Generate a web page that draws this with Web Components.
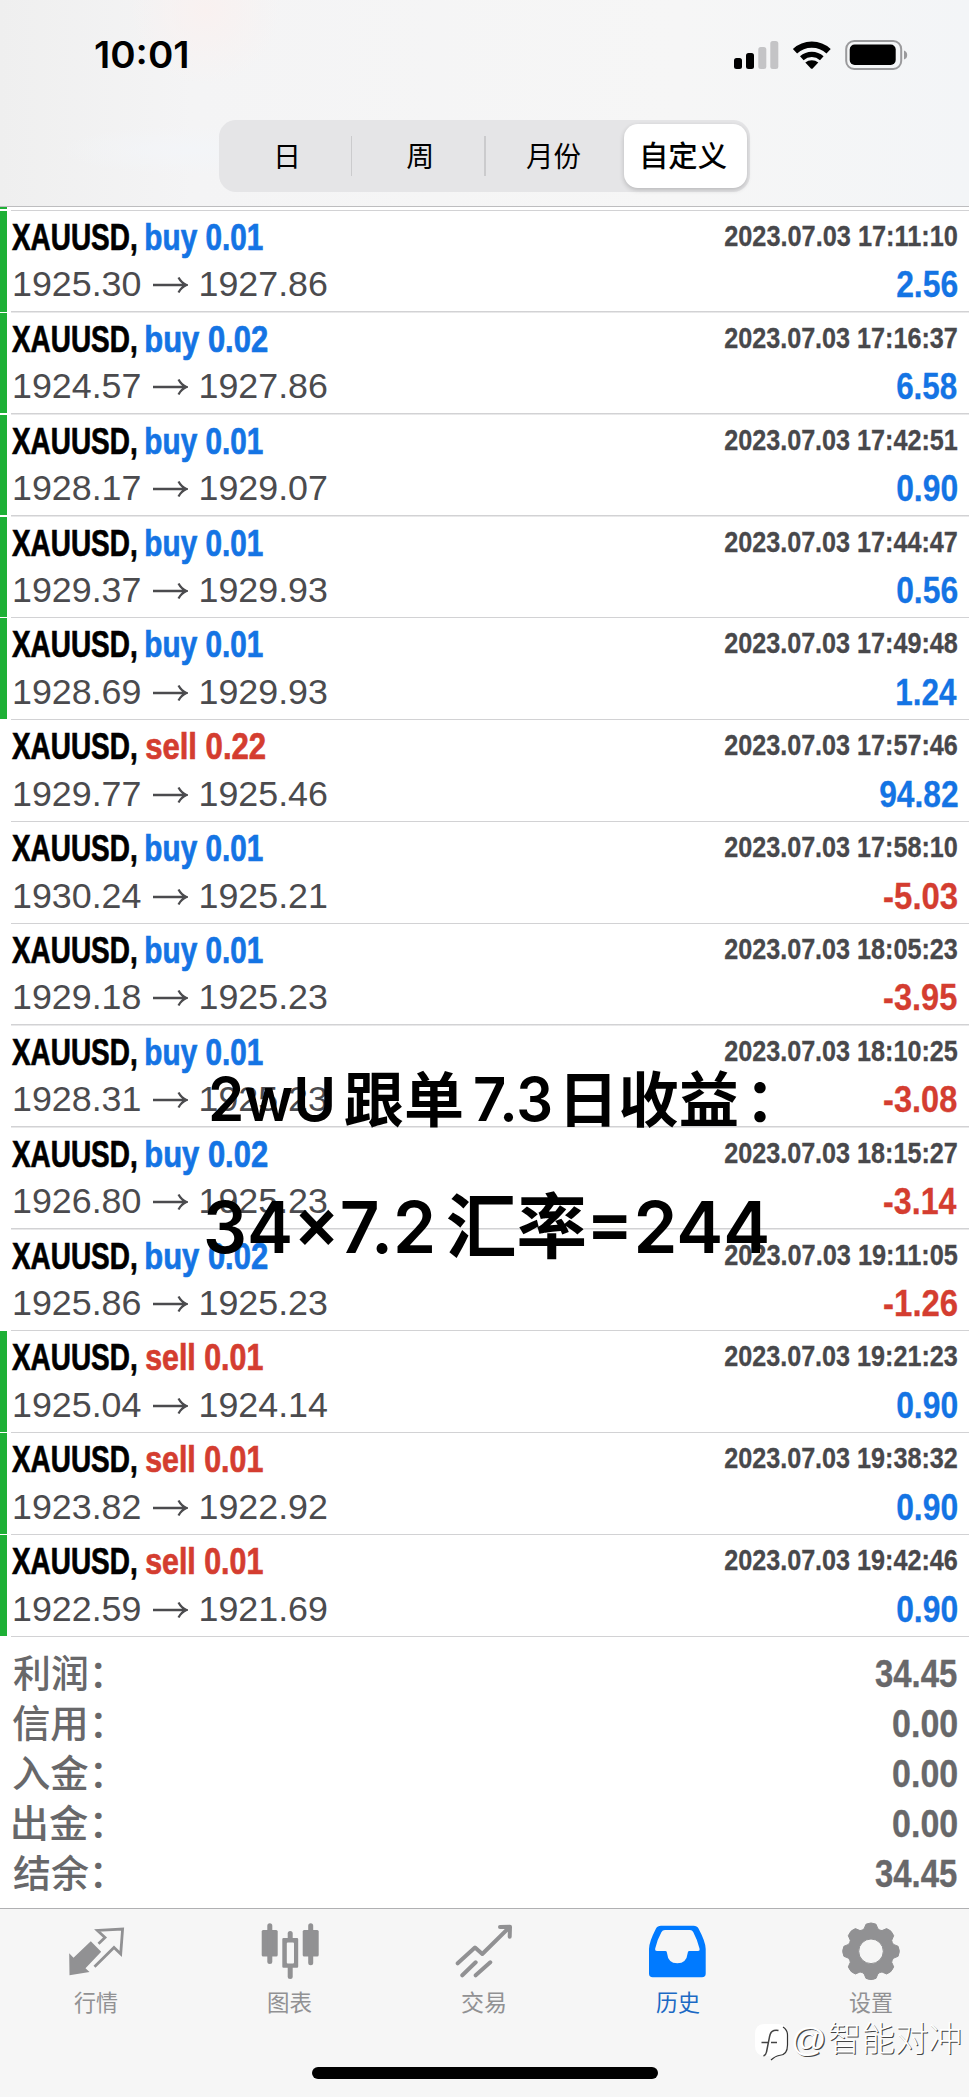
<!DOCTYPE html>
<html lang="zh-CN">
<head>
<meta charset="utf-8">
<title>历史</title>
<style>
html,body{margin:0;padding:0;background:#fff}
body{width:969px;height:2097px;overflow:hidden;font-family:"Liberation Sans","Noto Sans CJK SC",sans-serif}
</style>
</head>
<body>
<history-screen></history-screen>
<script>
const CJK='"Noto Sans CJK SC",sans-serif';
const SANS='"Liberation Sans",'+CJK;
const UI='Inter,'+CJK;
const define=(name,html,setup)=>customElements.define(name,class extends HTMLElement{
  connectedCallback(){
    if(this.shadowRoot)return;
    const root=this.attachShadow({mode:'open'});
    const t=document.createElement('template');
    t.innerHTML=typeof html==='function'?html(this):html;
    root.append(t.content.cloneNode(true));
    if(setup)setup(this,root);
  }
});

/* Text squeezed or stretched horizontally so that its ink is exactly `w` pixels wide. */
const ctx=document.createElement('canvas').getContext('2d');
define('fit-text',el=>{
  const w=+el.getAttribute('w'),size=el.getAttribute('size'),weight=el.getAttribute('weight')||400;
  const family=el.getAttribute('face')==='ui'?UI:SANS;
  ctx.font=`${weight} ${size}px ${family}`;
  const m=ctx.measureText(el.textContent);
  const l=-m.actualBoundingBoxLeft,k=w/(m.actualBoundingBoxRight+m.actualBoundingBoxLeft);
  return `<style>:host{display:block;flex:none;width:${w}px;white-space:pre;font:${weight} ${size}px/37px ${family}}
  span{display:inline-block;transform-origin:0 0;transform:translateX(${-l*k}px) scaleX(${k});margin-right:-300px}</style><span><slot></slot></span>`;
});

define('status-bar',`<style>
:host{display:flex;align-items:center;height:110px;box-sizing:border-box;padding:0 61px 0 95px}
.g{flex:1}
svg{display:block}
</style>
<fit-text w="92" size="36.5" weight="600" face="ui">10:01</fit-text><div class="g"></div>
<svg width="174" height="32" viewBox="0 0 174 32">
<g><rect x="0" y="19" width="8" height="11" rx="2.5"/><rect x="12" y="14" width="8" height="16" rx="2.5"/>
<rect x="24.3" y="8" width="8" height="22" rx="2.5" fill="#c4c4c6"/><rect x="36.3" y="2" width="8" height="28" rx="2.5" fill="#c4c4c6"/></g>
<g fill="none" stroke="#000"><path d="M61 12.2A24.5 24.5 0 0 1 94.6 12.2" stroke-width="6.2"/><path d="M67.8 19.2A15 15 0 0 1 87.8 19.2" stroke-width="5.4"/></g>
<path d="M71.3 23.6A10 10 0 0 1 84.3 23.6L78.7 29.4Q77.8 30.1 76.9 29.4Z"/>
<rect x="112.2" y="2" width="55" height="28" rx="8" fill="none" stroke="#9a9a9c" stroke-width="2"/>
<rect x="115.7" y="5.5" width="46" height="20.5" rx="5"/>
<path d="M170 11.5q3.2 1 3.2 4.5t-3.2 4.5z" fill="#9a9a9c"/></svg>`);

define('segment-control',`<style>
:host{display:grid;grid-template-columns:130px 133.500px 138px 123.500px;width:531px;height:72px;box-sizing:border-box;padding:4px 3px;background:#e5e5e7;border-radius:17px;margin:0 auto}
.s{display:grid;place-items:center;position:relative}
.s fit-text{margin-top:2px}
.s i{display:block;position:absolute;right:0;top:12px;height:40px;width:1.5px;background:#cbcbcd}
.m{padding-right:3px}
.on{background:#fff;border-radius:14px;box-shadow:0 2px 5px #0003}
</style>
<div class="s"><fit-text w="20" size="28">日</fit-text><i></i></div>
<div class="s"><fit-text w="25" size="28">周</fit-text><i></i></div>
<div class="s m"><fit-text w="55" size="28">月份</fit-text></div>
<div class="s on"><fit-text w="84" size="29" weight="500">自定义</fit-text></div>`);

define('trade-row',el=>{
  const [side,vol,from,to,date,profit,flag]=el.getAttribute('data').split('|');
  const sw=vol==='0.22'?119:vol==='0.02'?121:117;
  const pw=profit[0]==='-'?73:profit.length>4?77.5:60;
  return `<style>
:host{display:grid;grid-template-columns:12px 1fr auto;grid-template-rows:37px 37px;row-gap:10.4px;padding:8px 12px 0 0;height:101.86px;box-sizing:border-box;
 background:linear-gradient(#d2d2d4,#d2d2d4) 11px 100%/100% 1.5px no-repeat}
.bar{grid-row:1/3;width:7px;height:100.5px;margin-top:-8px;background:${flag?'#1eb036':'transparent'}}
.l{display:flex}.r{display:flex;justify-content:flex-end}
.t{-webkit-text-stroke:.7px currentColor}
.r{-webkit-text-stroke:.3px currentColor}
.d{margin-top:-2px}
.p{font:35.8px/37px "Liberation Sans",sans-serif;color:#4b4b4e}
.p span{width:187.5px}.p svg{width:36px;height:20px;margin:9px 0 0 -48px}.p b{font-weight:400;margin-left:11px}
</style>
<div class="bar"></div>
<div class="l t"><fit-text w="124" size="36.5" weight="700" style="color:#000">XAUUSD,</fit-text><fit-text style="margin-left:10px;color:${side==='buy'?'#1474e4':'#d43d30'}" w="${sw}" size="36.5" weight="700">${side} ${vol}</fit-text></div>
<div class="r d"><fit-text style="color:#48484b" w="232.5" size="29.5" weight="700">${date}</fit-text></div>
<div class="l p"><span>${from}</span><svg viewBox="0 0 36 20"><path d="M1 10H34M26.500 2.500Q29.500 8 34.500 10Q29.500 12 26.500 17.500" fill="none" stroke="#4b4b4e" stroke-width="2.300"/></svg><b>${to}</b></div>
<div class="r"><fit-text style="color:${profit[0]==='-'?'#d43d30':'#1474e4'}" w="${pw}" size="36.5" weight="700">${profit}</fit-text></div>`;
});

define('summary-row',el=>`<style>
:host{display:flex;justify-content:space-between;align-items:center;height:49.8px;padding:0 12px 0 12.500px;color:#68686a}
</style><fit-text style="margin-top:2px" w="89" size="37.5" weight="500">${el.getAttribute('label')}：</fit-text>
<fit-text style="-webkit-text-stroke:.3px currentColor" w="${el.getAttribute('value').length>4?82:64}" size="38.5" weight="700">${el.getAttribute('value')}</fit-text>`);

const gear=(()=>{let d='';for(let i=0;i<8;i++){const a=i*45;
  const p=(r,o)=>{const t=(a+o-90)*Math.PI/180;return (30+r*Math.cos(t)).toFixed(1)+' '+(29.3+r*Math.sin(t)).toFixed(1)};
  d+=(i?'L':'M')+p(23.5,-17)+'L'+p(27.6,-10.5)+'Q'+p(29.6,0)+' '+p(27.6,10.5)+'L'+p(23.5,17)+'Q'+p(22.6,22.5)+' '+p(23.5,28);}
  return d+'Z';})();
const ICONS={
quotes:'<path fill="currentColor" d="M3.200 31.300L7.500 35.700L24.800 19.300L35.200 29.700L19.500 46.300L23.500 50L3.500 53.200Z"/><path fill="none" stroke="currentColor" stroke-width="2.800" d="M32.500 21.700L39 15.500L31.400 8.400L56.600 7L54.700 32L48 25.500L28.500 44.700"/>',
chart:'<g fill="currentColor"><rect x="1.700" y="8" width="16" height="26.500" rx="1.500"/><rect x="7.300" y="1.300" width="5" height="40.700" rx="2.500"/><rect x="42.700" y="8" width="16" height="26.500" rx="1.500"/><rect x="48.200" y="1.300" width="5" height="42" rx="2.500"/><rect x="27.700" y="9" width="5" height="10" rx="2.500"/><rect x="27.700" y="43" width="5" height="14" rx="2.500"/><path fill-rule="evenodd" d="M23.500 16H37Q38.200 16 38.200 17.200V44.500Q38.200 45.700 37 45.700H23.500Q22.300 45.700 22.300 44.500V17.200Q22.300 16 23.500 16ZM27.800 20.500Q26.800 20.500 26.800 21.500V40.500Q26.800 41.500 27.800 41.500H33Q34 41.500 34 40.500V21.500Q34 20.500 33 20.500Z"/></g>',
trade:'<path fill="none" stroke="currentColor" stroke-width="4" stroke-linecap="round" stroke-linejoin="round" d="M4.700 41.300L22 25.500L29.300 32L56 5.700M47 5L57 4.700L56.700 14.700M9.300 53.300L22.700 40.300M22.700 53.300L37.300 40.300"/>',
history:'<path fill="currentColor" fill-rule="evenodd" d="M14 3.700H46.500Q50 3.700 51.500 6.500Q58.700 20 58.700 27V51.500Q58.700 55.300 55 55.300H5.700Q2 55.300 2 51.500V27Q2 20 9 6.500Q10.500 3.700 14 3.700ZM18 8Q15.500 8 14.500 10Q10 18 8.200 26.500Q7.800 29 10 29H18.500Q20 29 20 31Q21 41.300 30.300 41.300T40.700 31Q40.700 29 42.200 29H51Q53 29 52.500 26.500Q50.500 18 46.200 10Q45.200 8 43 8Z"/>',
settings:'<path fill="currentColor" stroke="currentColor" stroke-linejoin="round" fill-rule="evenodd" d="'+gear+'M42.300 29.300A12.300 12.300 0 1 0 17.700 29.300A12.300 12.300 0 1 0 42.300 29.300Z"/>'};
define('tab-item',el=>`<style>
:host{display:flex;flex:1;flex-direction:column;align-items:center;color:${el.hasAttribute('active')?'#007aff':'#919193'}}
svg{display:block;width:60px;height:60px}
fit-text{margin-top:3px;${el.hasAttribute('active')?'color:#1b69c4':''}}
</style><svg viewBox="0 0 60 60">${ICONS[el.getAttribute('icon')]}</svg><fit-text w="43.500" size="22.500">${el.getAttribute('label')}</fit-text>`);

define('tab-bar',`<style>
:host{display:block;height:189px;box-sizing:border-box;border-top:1.5px solid #b0b0b2;background:#f6f6f6;padding-top:13px}
nav{display:flex;height:144.500px;margin-left:-1px;margin-right:1px}
.home{width:346px;height:12px;border-radius:6px;background:#000;margin:0 auto}
</style><nav><tab-item icon="quotes" label="行情"></tab-item><tab-item icon="chart" label="图表"></tab-item><tab-item icon="trade" label="交易"></tab-item><tab-item icon="history" label="历史" active></tab-item><tab-item icon="settings" label="设置"></tab-item></nav><div class="home"></div>`);

define('note-overlay',`<style>
:host{position:absolute;left:0;top:1062px;width:969px;color:#000}
div{display:flex;align-items:center;height:74px}
.c{margin-top:4px}
.b{margin-top:52px}
</style>
<div style="padding-left:211px"><fit-text w="121" size="60" weight="600" face="ui">2wU</fit-text><fit-text class="c" style="margin-left:13px" w="117" size="60" weight="700">跟单</fit-text><fit-text style="margin-left:13px" w="76" size="60" weight="600" face="ui">7.3</fit-text><fit-text class="c" style="margin-left:16px" w="170" size="60" weight="700">日收益</fit-text><fit-text class="c" style="margin-left:17px" w="12" size="60" weight="700">：</fit-text></div>
<div class="b" style="padding-left:206px"><fit-text style="margin-top:5px" w="226" size="71" weight="600" face="ui">34×7.2</fit-text><fit-text style="margin-left:15px;margin-top:5px" w="138" size="71" weight="700">汇率</fit-text><fit-text style="margin-left:8px;margin-top:5px" w="174" size="71" weight="600" face="ui">=244</fit-text></div>`);

define('water-mark',`<style>
:host{position:absolute;left:754px;top:2022px;display:flex;align-items:center;height:40px;color:#fff}
svg{display:block;width:35px;height:40px}
fit-text{text-shadow:1px 1px 0 #444;margin-top:-5px}
</style><svg viewBox="0 0 35 40"><path fill="#fff" d="M11 2H24Q33.500 2 33.500 12V23Q33.500 33.500 25 33.500Q21.500 34 17 38Q18 35 16 34H10Q1 33 1 24V12Q1 2 11 2Z"/><path d="M29 5Q33.500 8 33.500 13V23Q33.500 33.500 25 33.500Q21.500 34 17 38" fill="none" stroke="#333" stroke-width="1.200"/><path d="M24.500 8.500Q16.500 7 15.500 15L12.500 30Q12 33 9.500 34M7.500 20.500H14M17 20.500H23" fill="none" stroke="#444" stroke-width="1.500"/></svg><fit-text style="margin-left:4px" w="31" size="33">@</fit-text><fit-text style="margin-left:5px" w="131" size="34" weight="300">智能对冲</fit-text>`);

const trades=['buy|0.01|1925.30|1927.86|17:11:10|2.56|1','buy|0.02|1924.57|1927.86|17:16:37|6.58|1','buy|0.01|1928.17|1929.07|17:42:51|0.90|1','buy|0.01|1929.37|1929.93|17:44:47|0.56|1','buy|0.01|1928.69|1929.93|17:49:48|1.24|1','sell|0.22|1929.77|1925.46|17:57:46|94.82|','buy|0.01|1930.24|1925.21|17:58:10|-5.03|','buy|0.01|1929.18|1925.23|18:05:23|-3.95|','buy|0.01|1928.31|1925.23|18:10:25|-3.08|','buy|0.02|1926.80|1925.23|18:15:27|-3.14|','buy|0.02|1925.86|1925.23|19:11:05|-1.26|','sell|0.01|1925.04|1924.14|19:21:23|0.90|1','sell|0.01|1923.82|1922.92|19:38:32|0.90|1','sell|0.01|1922.59|1921.69|19:42:46|0.90|1'];
define('history-screen',()=>`<style>
:host{display:flex;flex-direction:column;width:969px;height:2097px;position:relative;overflow:hidden;background:#fff}
header{height:207px;box-sizing:border-box;border-bottom:1.500px solid #bdbdbf;
 background:radial-gradient(circle at 205px 10px,#f9f1f0,transparent 75px),radial-gradient(ellipse at 190px 150px,#f3f5f8,transparent 130px),linear-gradient(90deg,#efefef,#f4f4f5 20%,#f6f6f6 70%,#f3f5f7)}
segment-control{margin-top:10px}
.gap{height:4px;box-sizing:border-box;background:linear-gradient(90deg,#1eb036 7px,transparent 7px) 0 0/100% 2px no-repeat,linear-gradient(#d2d2d4,#d2d2d4) 11px 2.500px/100% 1.500px no-repeat}
.sum{padding-top:12px;flex:1}
</style>
<header><status-bar></status-bar><segment-control></segment-control></header><div class="gap"></div>
<main>${trades.map(t=>{const a=t.split('|');a[4]='2023.07.03 '+a[4];return `<trade-row data="${a.join('|')}"></trade-row>`}).join('')}</main>
<section class="sum">${[['利润','34.45'],['信用','0.00'],['入金','0.00'],['出金','0.00'],['结余','34.45']].map(([l,v])=>`<summary-row label="${l}" value="${v}"></summary-row>`).join('')}</section>
<tab-bar></tab-bar><note-overlay></note-overlay><water-mark></water-mark>`);
</script>
</body>
</html>
